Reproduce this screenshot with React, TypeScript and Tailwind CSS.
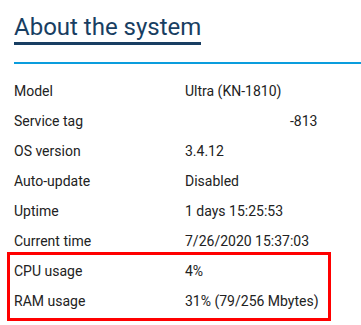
const rows: { label: string; value: string; pad?: boolean }[] = [
  { label: "Model", value: "Ultra (KN-1810)" },
  { label: "Service tag", value: "-813", pad: true },
  { label: "OS version", value: "3.4.12" },
  { label: "Auto-update", value: "Disabled" },
  { label: "Uptime", value: "1 days 15:25:53" },
  { label: "Current time", value: "7/26/2020 15:37:03" },
  { label: "CPU usage", value: "4%" },
  { label: "RAM usage", value: "31% (79/256 Mbytes)" },
];

export default function App() {
  return (
    <div
      className="relative h-[325px] w-[361px] overflow-hidden bg-white pl-[14px] text-[#222]"
      style={{ fontFamily: "Roboto, 'Liberation Sans', sans-serif" }}
    >
      <div className="pt-[13px]">
        <h1 className="inline-block border-b-[3px] border-[#183e62] text-[24px] leading-[29px] text-[#183e62]">
          About the system
        </h1>
      </div>
      <div className="mt-[17px] h-[2px] bg-[#0a9ddd]" />
      <dl className="mt-[12px] text-[14px]">
        {rows.map((r) => (
          <div key={r.label} className="flex h-[30px] items-center leading-[30px]">
            <dt className="w-[171px] shrink-0">{r.label}</dt>
            <dd className={r.pad ? "pl-[105px]" : ""}>{r.value}</dd>
          </div>
        ))}
      </dl>
      <div className="absolute left-[7px] top-[252px] h-[69px] w-[324px] border-[3px] border-[#f00]" />
    </div>
  );
}
